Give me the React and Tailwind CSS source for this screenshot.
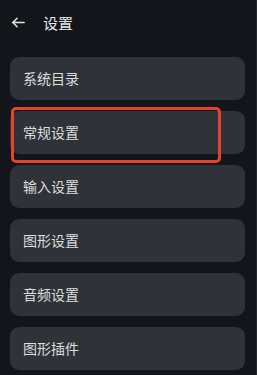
import React from "react";

const items = ["系统目录", "常规设置", "输入设置", "图形设置", "音频设置", "图形插件"];

export default function App() {
  return (
    <div
      className="relative w-[257px] h-[375px] overflow-hidden bg-[#12151a] border-r border-[#23272d]"
      style={{ fontFamily: '"Noto Sans CJK SC", "Noto Sans", sans-serif' }}
    >
      <div className="flex items-center h-[44px] pl-[10px]">
        <svg width="17" height="17" viewBox="0 0 24 24" fill="none" stroke="#e6e6e6" strokeWidth="2.1" strokeLinecap="round" strokeLinejoin="round">
          <path d="M20 12H4" />
          <path d="M10 6l-6 6 6 6" />
        </svg>
        <span className="ml-[16px] text-[15px] text-[#e8e8e8] leading-none">设置</span>
      </div>
      <div className="flex flex-col gap-[11px] pl-[10px] pr-[11px] pt-[13px]">
        {items.map((t) => (
          <div key={t} className="h-[43px] rounded-[9px] bg-[#2f3339] flex items-center pl-[13px] text-[14px] text-[#dedede]">
            {t}
          </div>
        ))}
      </div>
      <div className="absolute left-[11px] top-[107px] w-[210px] h-[56px] border-[3px] border-[#e5432e] rounded-[5px]" />
    </div>
  );
}
